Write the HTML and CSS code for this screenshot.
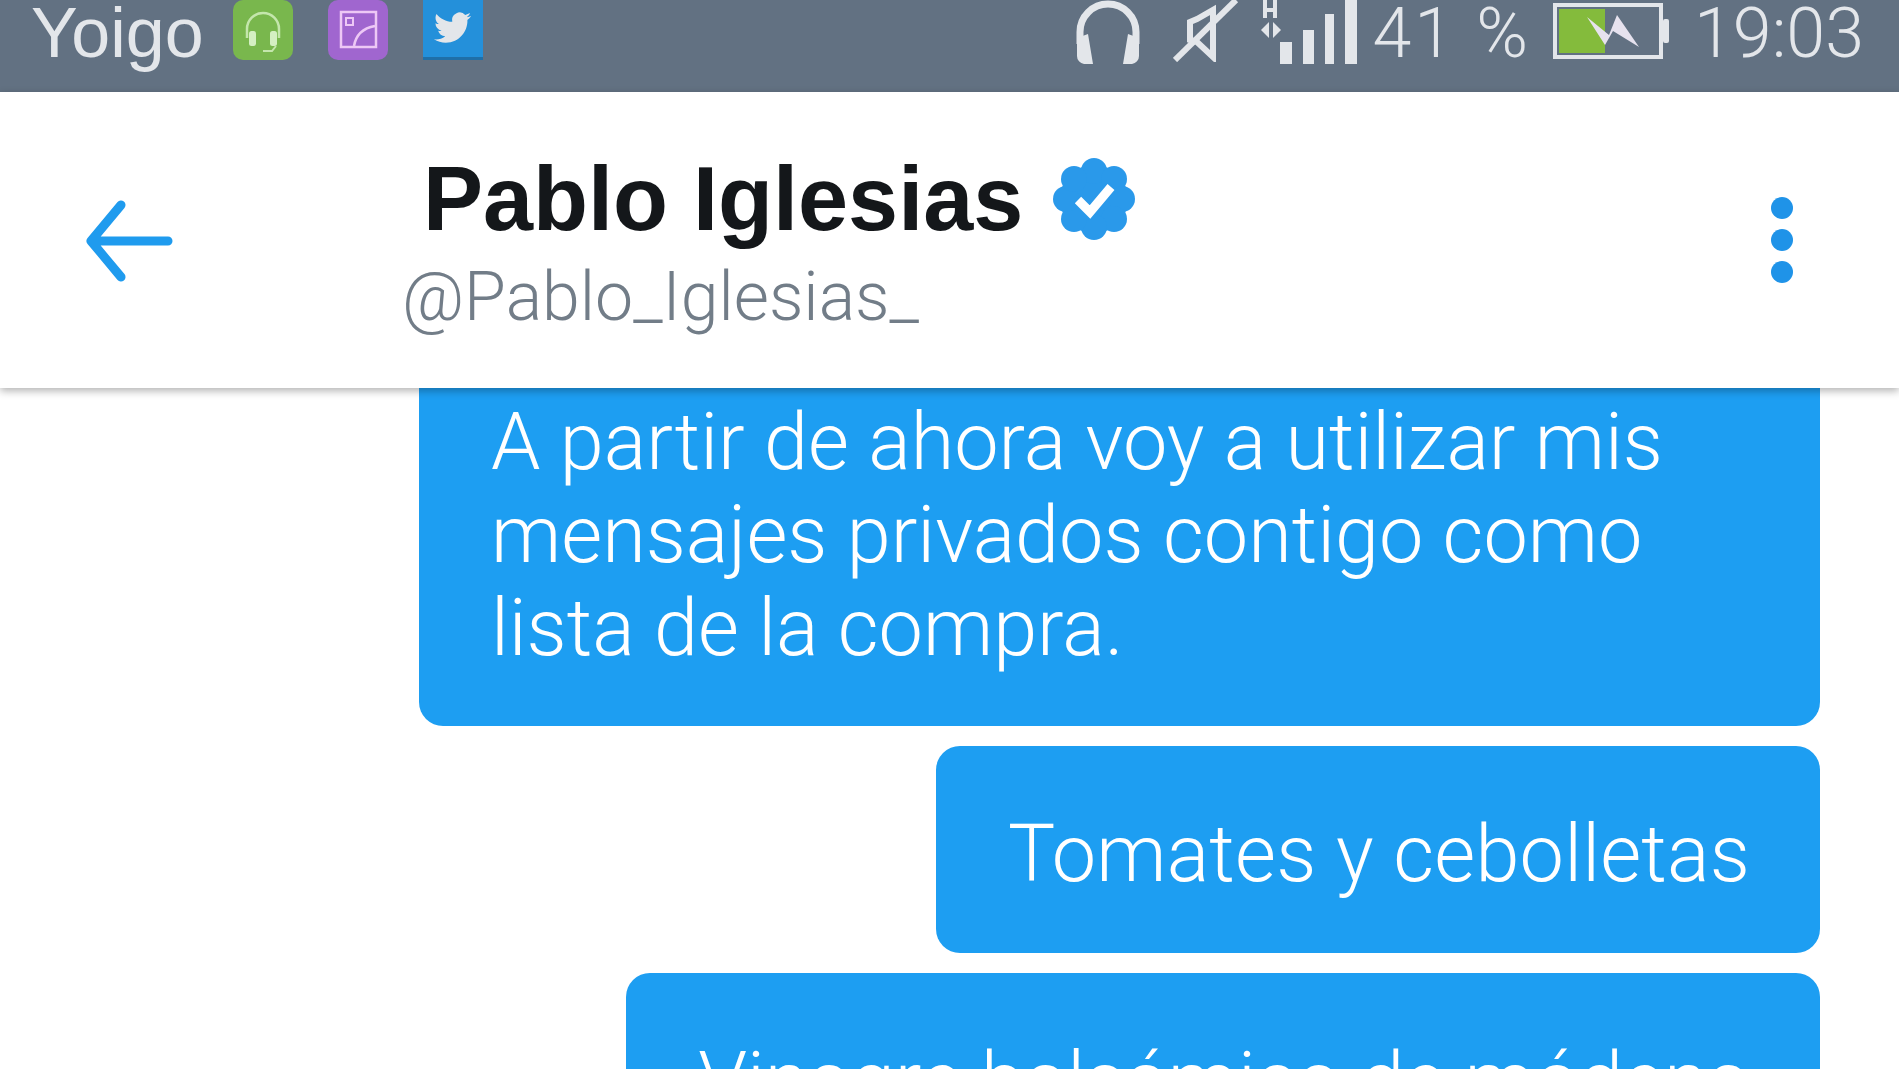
FILE: index.html
```html
<!DOCTYPE html>
<html lang="es">
<head>
    <meta charset="UTF-8">
    <meta name="viewport" content="width=device-width, initial-scale=1.0">
    <title>Pablo Iglesias</title>
    <link rel="stylesheet" href="styles.css">
</head>
<body>
    <div class="statusbar">
        <div class="status-left">
            <span class="carrier">Yoigo</span>
            <svg class="app-icon" viewBox="0 0 60 60">
                <rect width="60" height="60" rx="10" fill="#79b74d"/>
                <path d="M14 38V29a16 16 0 0 1 32 0v9" fill="none" stroke="#c4e6ac" stroke-width="2.5"/>
                <rect x="16" y="31" width="7" height="15" rx="2.5" fill="#d4efc2"/>
                <rect x="37" y="31" width="7" height="15" rx="2.5" fill="#d4efc2"/>
                <path d="M30 51h9l4-5" fill="none" stroke="#c4e6ac" stroke-width="2"/>
            </svg>
            <svg class="app-icon" viewBox="0 0 60 60">
                <rect width="60" height="60" rx="10" fill="#a066cf"/>
                <rect x="13" y="12" width="35" height="35" fill="none" stroke="#edc8f5" stroke-width="2.5"/>
                <rect x="18" y="18" width="7" height="7" fill="none" stroke="#edc8f5" stroke-width="2"/>
                <path d="M26 46c2-12 10-18 21-20" fill="none" stroke="#edc8f5" stroke-width="2.5"/>
            </svg>
            <svg class="app-icon" viewBox="0 0 60 60">
                <rect width="60" height="60" fill="#1f6fa8"/>
                <rect width="60" height="57" fill="#2490da"/>
                <g transform="translate(11 9) scale(1.55)">
                    <path fill="#e3e6ea" d="M23.953 4.57a10 10 0 01-2.825.775 4.958 4.958 0 002.163-2.723c-.951.555-2.005.959-3.127 1.184a4.92 4.92 0 00-8.384 4.482C7.69 8.095 4.067 6.13 1.64 3.162a4.822 4.822 0 00-.666 2.475c0 1.71.87 3.213 2.188 4.096a4.904 4.904 0 01-2.228-.616v.06a4.923 4.923 0 003.946 4.827 4.996 4.996 0 01-2.212.085 4.936 4.936 0 004.604 3.417 9.867 9.867 0 01-6.102 2.105c-.39 0-.779-.023-1.17-.067a13.995 13.995 0 007.557 2.209c9.053 0 13.998-7.496 13.998-13.985 0-.21 0-.42-.015-.63A9.935 9.935 0 0024 4.59z"/>
                </g>
            </svg>
        </div>
        <div class="status-right">
            <svg class="icon-headphones" viewBox="0 0 70 64">
                <path d="M7 44V32a28 28 0 0 1 56 0v12" fill="none" stroke="#e3e6ea" stroke-width="7"/>
                <path d="M4 38l11-4 5 30h-9a8 8 0 0 1-7-8zM66 38l-11-4-5 30h9a8 8 0 0 0 7-8z" fill="#e3e6ea"/>
            </svg>
            <svg class="icon-mute" viewBox="0 0 66 62">
                <path d="M40 10v47L24 42l-7-2V22l7-3z" fill="none" stroke="#e3e6ea" stroke-width="6"/>
                <path d="M2 60L63 0" stroke="#e3e6ea" stroke-width="6"/>
            </svg>
            <svg class="icon-signal" viewBox="0 0 96 64">
                <g fill="#e3e6ea">
                    <path d="M2 0h4v8h6V0h4v18H12v-6H6v6H2z"/>
                    <path d="M8 22v16L0 30zM12 22v16l8-8z"/>
                    <rect x="19" y="42" width="12" height="22"/>
                    <rect x="42" y="30" width="11" height="34"/>
                    <rect x="64" y="14" width="9" height="50"/>
                    <rect x="84" y="0" width="12" height="64"/>
                </g>
            </svg>
            <span class="status-text battery-pct">41 %</span>
            <svg class="icon-battery" viewBox="0 0 116 56">
                <rect x="2" y="2" width="106" height="52" fill="none" stroke="#e3e6ea" stroke-width="4"/>
                <rect x="6" y="6" width="46" height="44" fill="#84bb3c"/>
                <rect x="110" y="16" width="6" height="24" rx="2" fill="#e3e6ea"/>
                <path d="M34 14l22 18 8-20 22 32-26-16-8 14z" fill="#e6e2ee"/>
            </svg>
            <span class="status-text clock">19:03</span>
        </div>
    </div>

    <div class="header">
        <svg class="back" viewBox="0 0 88 82">
            <path d="M36 5L6 41l30 36M8 41h75" fill="none" stroke="#1f9bee" stroke-width="9" stroke-linecap="round" stroke-linejoin="round"/>
        </svg>
        <div class="profile">
            <div class="name-row">
                <span class="name">Pablo Iglesias</span>
                <svg class="verified" viewBox="0 0 82 82">
                    <g fill="#2a99ea">
                        <circle cx="41" cy="41" r="34"/>
                        <circle cx="41" cy="13" r="13"/>
                        <circle cx="61" cy="21" r="13"/>
                        <circle cx="69" cy="41" r="13"/>
                        <circle cx="61" cy="61" r="13"/>
                        <circle cx="41" cy="69" r="13"/>
                        <circle cx="21" cy="61" r="13"/>
                        <circle cx="13" cy="41" r="13"/>
                        <circle cx="21" cy="21" r="13"/>
                    </g>
                    <path d="M25 42l12 12 21-25" fill="none" stroke="#fff" stroke-width="9"/>
                </svg>
            </div>
            <div class="handle">@Pablo_Iglesias_</div>
        </div>
        <div class="menu">
            <span class="dot"></span>
            <span class="dot"></span>
            <span class="dot"></span>
        </div>
    </div>

    <div class="conversation">
        <div class="bubble bubble-first">A partir de ahora voy a utilizar mis mensajes privados contigo como lista de la compra.</div>
        <div class="bubble bubble-short">Tomates y cebolletas</div>
        <div class="bubble">Vinagre balsámico de módena</div>
    </div>
</body>
</html>
```

FILE: styles.css
```css
html, body {
    margin: 0;
    padding: 0;
    height: 100%;
    overflow: hidden;
    background-color: #fff;
}
body {
    font-family: Roboto, "Liberation Sans", sans-serif;
    display: flex;
    flex-direction: column;
}
.statusbar {
    height: 92px;
    flex-shrink: 0;
    background-color: #627182;
    color: #e3e6ea;
    display: flex;
    justify-content: space-between;
    overflow: hidden;
    padding: 0 35px 0 31px;
}
.status-left {
    display: flex;
    align-items: flex-start;
}
.carrier {
    font-family: "Liberation Sans", sans-serif;
    font-size: 70px;
    line-height: 66px;
    margin-right: 29px;
}
.app-icon {
    width: 60px;
    height: 60px;
    margin-right: 35px;
}
.status-right {
    display: flex;
    align-items: flex-start;
}
.status-text {
    font-size: 70px;
    font-weight: 300;
    line-height: 66px;
}
.icon-headphones {
    width: 70px;
    height: 64px;
    margin-right: 30px;
}
.icon-mute {
    width: 66px;
    height: 62px;
    margin-right: 22px;
}
.icon-signal {
    width: 96px;
    height: 64px;
    margin-right: 16px;
}
.battery-pct {
    letter-spacing: 3px;
    margin-right: 21px;
}
.icon-battery {
    width: 118px;
    height: 56px;
    margin: 3px 24px 0 0;
}
.header {
    height: 296px;
    flex-shrink: 0;
    background-color: #fff;
    box-shadow: 0 3px 8px rgba(0, 0, 0, 0.3);
    position: relative;
    z-index: 1;
    display: flex;
    padding: 0 106px 0 85px;
}
.back {
    width: 88px;
    height: 82px;
    margin: 108px 229px 0 0;
}
.profile {
    flex: 1;
    padding-top: 57px;
}
.name-row {
    display: flex;
    align-items: center;
    margin-left: 21px;
}
.name {
    font-family: "Liberation Sans", sans-serif;
    font-size: 90px;
    font-weight: 700;
    line-height: 100px;
    color: #14171a;
    margin-right: 30px;
}
.verified {
    width: 82px;
    height: 82px;
}
.handle {
    font-size: 68px;
    font-weight: 300;
    line-height: 80px;
    color: #727d88;
    margin-top: 8px;
}
.menu {
    display: flex;
    flex-direction: column;
    gap: 10px;
    padding-top: 105px;
}
.dot {
    width: 22px;
    height: 22px;
    border-radius: 50%;
    background-color: #1f93e8;
}
.conversation {
    display: flex;
    flex-direction: column;
    align-items: flex-end;
    gap: 20px;
    padding-right: 79px;
}
.bubble {
    background-color: #1d9ef2;
    color: #fff;
    font-size: 79.2px;
    font-weight: 300;
    line-height: 93px;
    padding: 62px 70px 52px 72px;
    border-radius: 24px;
    white-space: nowrap;
}
.bubble-first {
    width: 1259px;
    white-space: normal;
    margin-top: -54px;
    padding-bottom: 51px;
}
.bubble-short {
    letter-spacing: 0.2px;
}
```
